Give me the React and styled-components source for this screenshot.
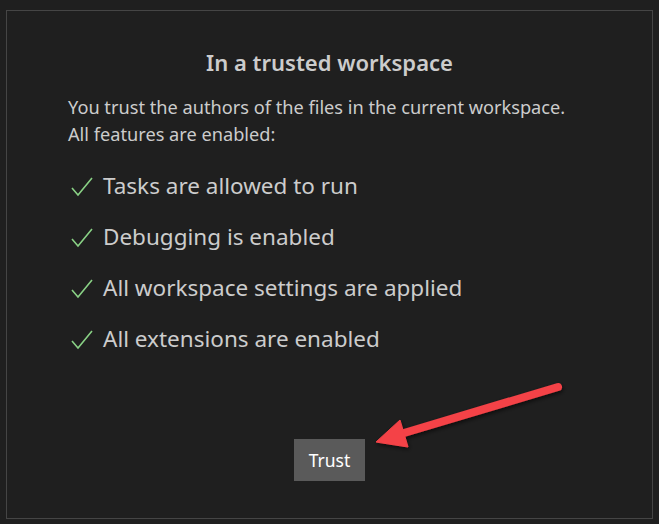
import React from 'react';
import styled, { createGlobalStyle } from 'styled-components';

const Global = createGlobalStyle`
  html, body {
    margin: 0;
    padding: 0;
    background: #1f1f1f;
  }
  body {
    font-family: "Noto Sans", "Open Sans", sans-serif;
  }
`;

const Page = styled.div`
  width: 659px;
  height: 524px;
  box-sizing: border-box;
  padding: 10px 6px 5px 6px;
  background: #1f1f1f;
`;

const Panel = styled.div`
  position: relative;
  height: 100%;
  box-sizing: border-box;
  border: 1px solid #454545;
  display: flex;
  flex-direction: column;
  align-items: center;
  padding-top: 36px;
  color: #cccccc;
`;

const Title = styled.h2`
  margin: 0;
  font-size: 22px;
  font-weight: 600;
  line-height: 30px;
  color: #cccccc;
`;

const Body = styled.div`
  align-self: stretch;
  padding: 0 0 0 61px;
`;

const Intro = styled.p`
  margin: 17px 0 0;
  font-size: 18.2px;
  line-height: 27px;
`;

const List = styled.ul`
  list-style: none;
  margin: 23px 0 0;
  padding: 0 0 0 3px;
  display: flex;
  flex-direction: column;
  gap: 21px;
`;

const Item = styled.li`
  display: flex;
  align-items: center;
  gap: 10px;
  font-size: 22.5px;
  line-height: 30px;
`;

const Check = styled.svg`
  width: 22px;
  height: 22px;
  flex: none;
`;

const Button = styled.button`
  margin-top: 85px;
  width: 71px;
  height: 42px;
  border: none;
  background: #5a5a5a;
  color: #ffffff;
  font-family: "Noto Sans", sans-serif;
  font-size: 17.5px;
  padding: 0;
`;

const Arrow = styled.svg`
  position: absolute;
  left: 351px;
  top: 355px;
  overflow: visible;
`;

const features = [
  'Tasks are allowed to run',
  'Debugging is enabled',
  'All workspace settings are applied',
  'All extensions are enabled',
];

const CheckIcon = () => (
  <Check viewBox="0 0 22 22">
    <path d="M1 13 L7 20 L21 3" fill="none" stroke="#89d185" strokeWidth="1.6" />
  </Check>
);

export default function App() {
  return (
    <Page>
      <Global />
      <Panel>
        <Title>In a trusted workspace</Title>
        <Body>
          <Intro>
            You trust the authors of the files in the current workspace.
            <br />
            All features are enabled:
          </Intro>
          <List>
            {features.map(f => (
              <Item key={f}>
                <CheckIcon />
                {f}
              </Item>
            ))}
          </List>
        </Body>
        <Button>Trust</Button>
        <Arrow width="220" height="100" viewBox="0 0 220 100">
          <defs>
            <filter id="sh" x="-20%" y="-50%" width="140%" height="200%">
              <feDropShadow dx="1" dy="2" stdDeviation="2" floodColor="#000" floodOpacity="0.6" />
            </filter>
          </defs>
          <g filter="url(#sh)" fill="#f44247" stroke="#f44247">
            <line x1="200" y1="21" x2="46" y2="67" strokeWidth="8" strokeLinecap="round" />
            <polygon points="18,76 42,54 50,81" strokeWidth="1" strokeLinejoin="round" />
          </g>
        </Arrow>
      </Panel>
    </Page>
  );
}
